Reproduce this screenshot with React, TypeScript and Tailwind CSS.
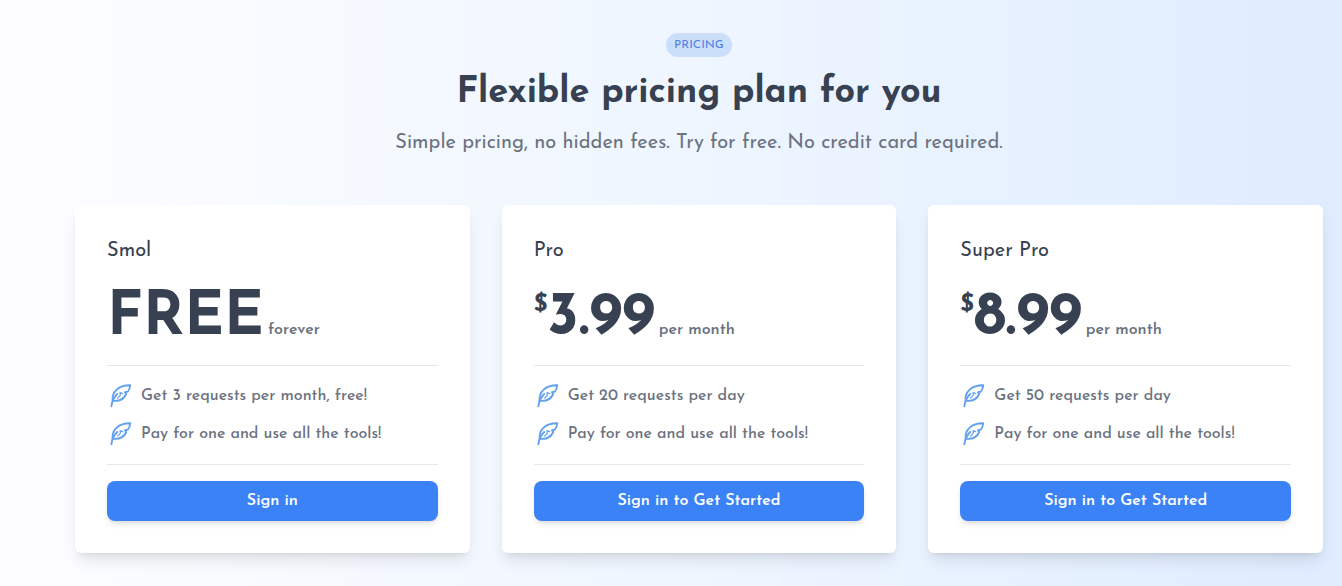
const plans = [
  {
    name: "Smol",
    price: "FREE",
    period: "forever",
    features: ["Get 3 requests per month, free!", "Pay for one and use all the tools!"],
    action: "Sign in",
  },
  {
    name: "Pro",
    currency: "$",
    price: "3.99",
    period: "per month",
    features: ["Get 20 requests per day", "Pay for one and use all the tools!"],
    action: "Sign in to Get Started",
  },
  {
    name: "Super Pro",
    currency: "$",
    price: "8.99",
    period: "per month",
    features: ["Get 50 requests per day", "Pay for one and use all the tools!"],
    action: "Sign in to Get Started",
  },
];

type Plan = (typeof plans)[number];

function FeatherIcon() {
  return (
    <svg
      viewBox="0 0 28 28"
      className="size-7 shrink-0 text-[#62a1ee]"
      fill="none"
      stroke="currentColor"
      strokeWidth="1.9"
      strokeLinecap="round"
      strokeLinejoin="round"
      aria-hidden="true"
    >
      <path d="M4.4 24.2C4.8 19.6 6.8 15.4 10.2 12" />
      <path d="M5.6 18.6C4.6 10 11.6 3 23.2 3.2C23 5.8 22.2 8.2 20.8 9.6L18 10.2L19.2 12C17.2 16.6 12.4 19.4 6.2 18.8" />
      <path d="M10.6 16.2L13.4 13.2L13 10.6L15.8 11.6" strokeWidth="1.2" />
    </svg>
  );
}

function PlanCard({ plan }: { plan: Plan }) {
  return (
    <div className="rounded-md bg-white p-8 shadow-lg">
      <h2 className="text-xl leading-7 text-[#374151]">{plan.name}</h2>

      <div className="mt-6 flex items-baseline text-[#374151]">
        {plan.currency && <span className="self-start text-2xl leading-8 font-bold">{plan.currency}</span>}
        <span className="text-6xl font-bold">{plan.price}</span>
        <span className="ml-1 text-base font-semibold text-[#6b7280]">{plan.period}</span>
      </div>

      <ul className="mt-4 flex flex-col gap-2.5 border-y border-gray-200 py-4">
        {plan.features.map((feature) => (
          <li key={feature} className="flex items-center gap-1.5 text-[#6b7280]">
            <FeatherIcon />
            <span className="text-base font-medium">{feature}</span>
          </li>
        ))}
      </ul>

      <button className="mt-4 h-10 w-full rounded-lg bg-[#3b82f6] text-base font-semibold text-white shadow-md hover:bg-blue-600">
        {plan.action}
      </button>
    </div>
  );
}

export default function App() {
  return (
    <main className="min-h-screen bg-linear-to-r from-[#fdfdff] via-[#eff6ff] to-[#dfecff] pl-14 font-['Josefin_Sans','Lato',sans-serif]">
      <div className="mx-auto max-w-7xl px-4 pt-[33px] pb-8">
        <header className="flex flex-col items-center text-center">
          <span className="rounded-full bg-[#cbdffb] px-2 py-1 text-xs text-[#4f7fe6]">PRICING</span>
          <h1 className="mt-4 text-4xl font-bold text-[#374151]">Flexible pricing plan for you</h1>
          <p className="mt-4 text-xl leading-7 text-[#6b7280]">
            Simple pricing, no hidden fees. Try for free. No credit card required.
          </p>
        </header>

        <div className="mt-12 grid grid-cols-3 gap-8">
          {plans.map((plan) => (
            <PlanCard key={plan.name} plan={plan} />
          ))}
        </div>
      </div>
    </main>
  );
}
